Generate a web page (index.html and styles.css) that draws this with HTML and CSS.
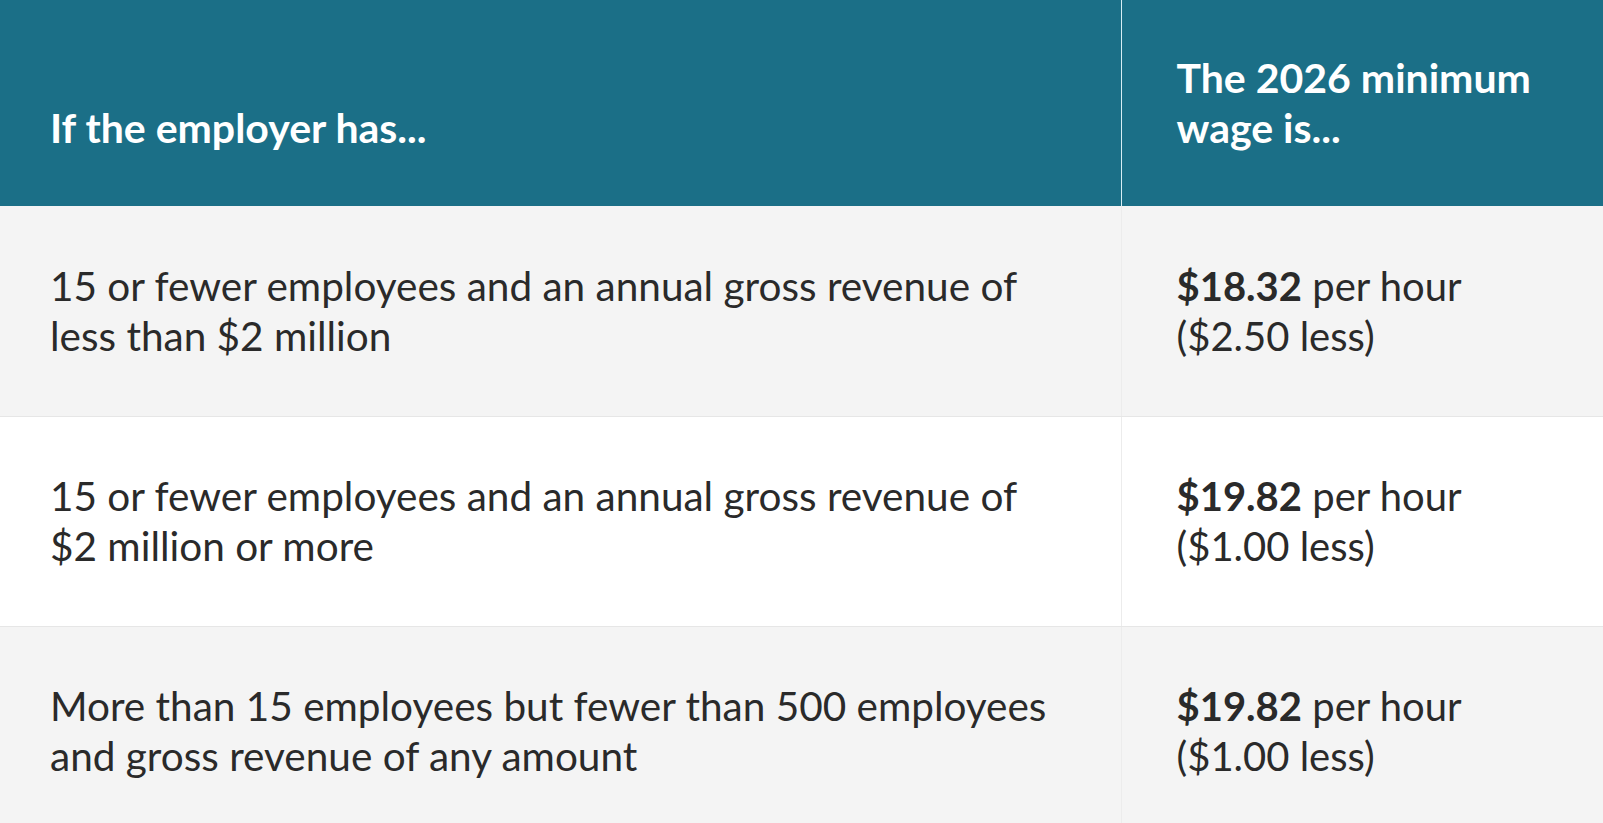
FILE: index.html
```html
<!DOCTYPE html>
<html lang="en">
<head>
<meta charset="utf-8">
<title>Minimum wage 2026</title>
<link rel="stylesheet" href="styles.css">
</head>
<body>
<table class="wage-table">
  <thead>
    <tr>
      <th class="col-employer">If the employer has...</th>
      <th class="col-wage">The 2026 minimum<br>wage is...</th>
    </tr>
  </thead>
  <tbody>
    <tr class="row-shaded">
      <td>15 or fewer employees and an annual gross revenue of<br>less than $2 million</td>
      <td><strong>$18.32</strong> per hour<br>($2.50 less)</td>
    </tr>
    <tr>
      <td>15 or fewer employees and an annual gross revenue of<br>$2 million or more</td>
      <td><strong>$19.82</strong> per hour<br>($1.00 less)</td>
    </tr>
    <tr class="row-shaded">
      <td>More than 15 employees but fewer than 500 employees<br>and gross revenue of any amount</td>
      <td><strong>$19.82</strong> per hour<br>($1.00 less)</td>
    </tr>
  </tbody>
</table>
</body>
</html>
```

FILE: styles.css
```css
html, body {
  margin: 0;
  padding: 0;
  background: #ffffff;
}
body {
  font-family: "Lato", "Open Sans", sans-serif;
  color: #2a2a2a;
}
.wage-table {
  width: 1603px;
  border-collapse: collapse;
  table-layout: fixed;
}
.wage-table th,
.wage-table td {
  line-height: 50px;
  text-align: left;
  white-space: nowrap;
}
.wage-table th {
  font-size: 41px;
  background: #1b6f87;
  color: #ffffff;
  font-weight: 700;
  height: 206px;
  box-sizing: border-box;
  vertical-align: bottom;
  padding: 0 20px 53px 50px;
}
.col-employer {
  width: 1121px;
  border-right: 1px solid #d8eef4;
}
.col-wage {
  width: 482px;
}
.wage-table th.col-wage {
  padding-left: 55px;
}
.wage-table td {
  font-size: 40.5px;
  vertical-align: middle;
  height: 210px;
  box-sizing: border-box;
  padding: 0 20px 0 50px;
  border-bottom: 1px solid #e6e6e6;
}
.wage-table td:first-child {
  border-right: 1px solid #ececec;
}
.wage-table td + td {
  font-size: 40px;
  padding-left: 55px;
}
.row-shaded td {
  background: #f4f4f4;
}
.wage-table strong {
  font-weight: 700;
}
```
